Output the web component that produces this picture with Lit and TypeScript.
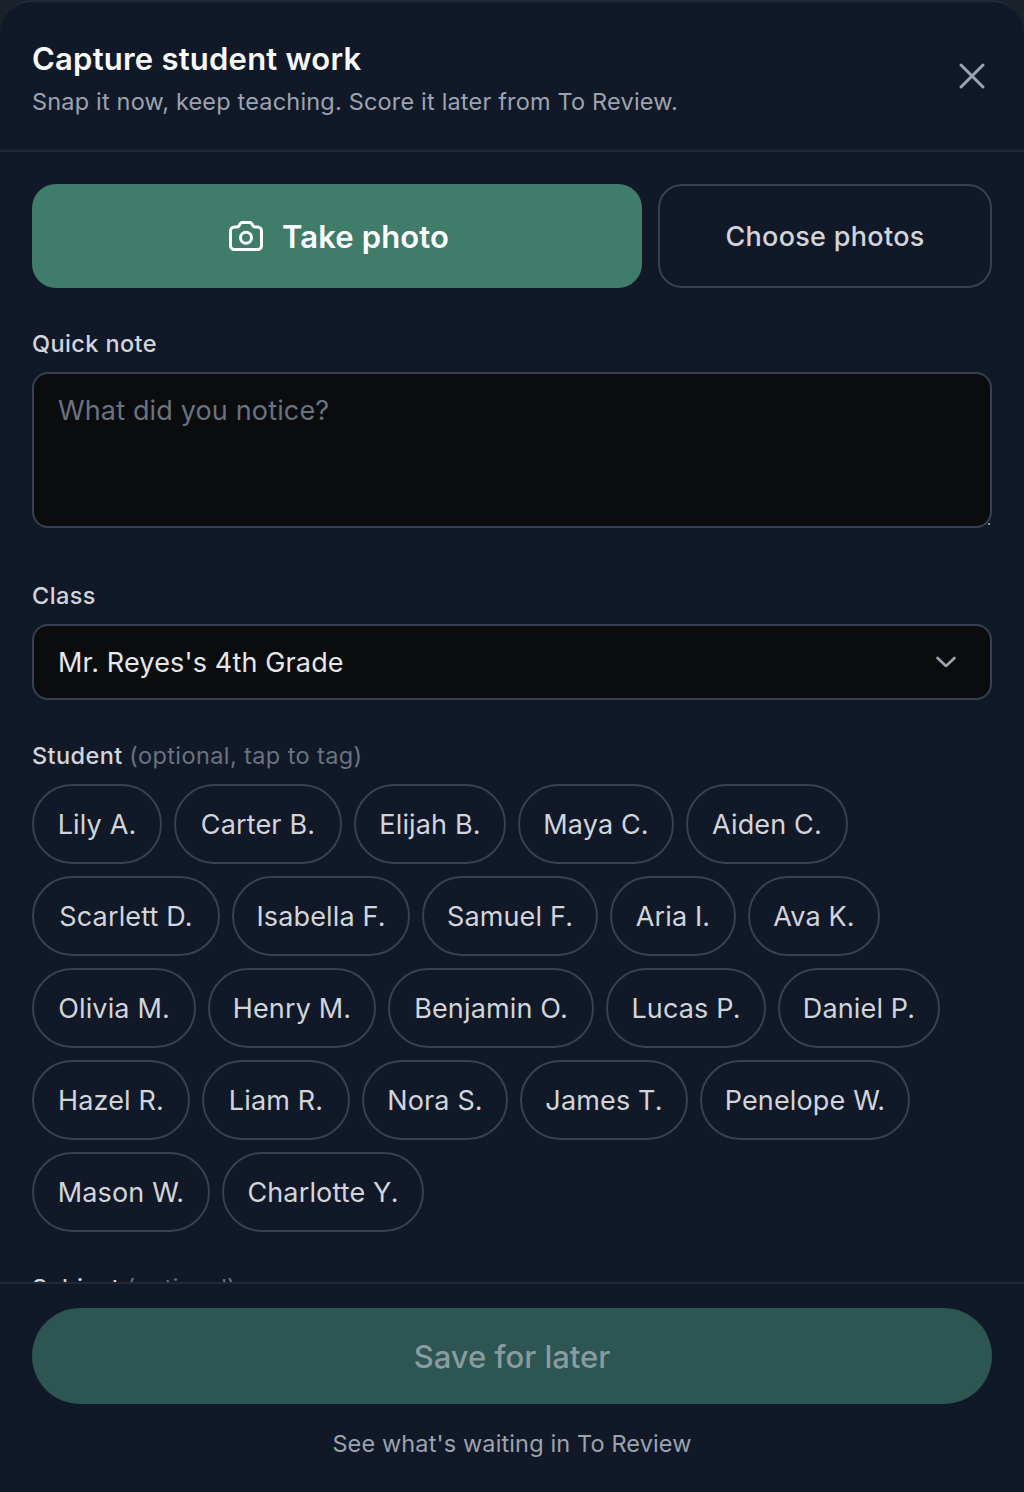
import { LitElement, html, css } from "lit";
import { customElement } from "lit/decorators.js";

const STUDENTS: [string, number][] = [["Lily A.",130],["Carter B.",168],["Elijah B.",152],["Maya C.",156],["Aiden C.",162],["Scarlett D.",188],["Isabella F.",178],["Samuel F.",176],["Aria I.",126],["Ava K.",132],["Olivia M.",164],["Henry M.",168],["Benjamin O.",206],["Lucas P.",160],["Daniel P.",162],["Hazel R.",158],["Liam R.",148],["Nora S.",146],["James T.",168],["Penelope W.",210],["Mason W.",178],["Charlotte Y.",202]];

@customElement("app-root")
export class AppRoot extends LitElement {
  static styles = css`
    :host { display: block; width: 1024px; height: 1492px; background: #1b2128; font-family: Inter, "Noto Sans", sans-serif; overflow: hidden; }
    * { box-sizing: border-box; }
    .sheet { height: 1492px; background: #111928; border-top: 2px solid #1f2937; border-radius: 32px 32px 0 0; display: flex; flex-direction: column; overflow: hidden; }
    .head { height: 150px; flex: none; border-bottom: 2px solid #1f2937; padding: 37px 32px 0 32px; display: flex; justify-content: space-between; align-items: flex-start; }
    h1 { margin: 0; font-size: 31px; line-height: 40px; font-weight: 600; color: #f9fafb; letter-spacing: 0.22px; }
    .sub { margin: 5px 0 0; font-size: 23.5px; line-height: 36px; color: #9ca3af; letter-spacing: 0.18px; }
    .close { margin: 23px 6px 0 0; width: 28px; height: 28px; color: #9ca3af; }
    .close svg { display: block; }
    .body { flex: 1; min-height: 0; overflow: hidden; padding: 32px 32px 0; }
    .actions { display: flex; gap: 16px; height: 104px; }
    .btn { display: flex; align-items: center; justify-content: center; border-radius: 24px; }
    .take { flex: 1; background: #3f7d6a; color: #fff; font-size: 31px; font-weight: 600; gap: 17px; letter-spacing: 0.13px; }
    .take svg { display: block; }
    .choose { width: 334px; flex: none; border: 2px solid #374151; color: #d1d5db; font-size: 27px; font-weight: 500; letter-spacing: 0.3px; }
    .label { font-size: 23.5px; line-height: 32px; font-weight: 500; color: #d1d5db; letter-spacing: 0.4px; }
    .label span { font-weight: 400; color: #6b7280; }
    .note-label { margin-top: 40px; }
    .note { margin-top: 12px; height: 156px; border: 2px solid #374151; border-radius: 16px; background: #0a0c0e; padding: 19px 24px; font-size: 27px; line-height: 36px; color: #6b7280; letter-spacing: 0.15px; position: relative; }
    .grip { position: absolute; right: 0; bottom: 1px; width: 2px; height: 2px; background: #8b93a0; }
    .class-label { margin-top: 52px; }
    .select { margin-top: 12px; height: 76px; border: 2px solid #374151; border-radius: 16px; background: #0a0c0e; padding: 0 32px 0 24px; display: flex; align-items: center; justify-content: space-between; font-size: 27px; color: #e5e7eb; letter-spacing: 0.15px; }
    .select svg { color: #9ca3af; display: block; }
    .student-label { margin-top: 40px; }
    .chips { margin-top: 12px; display: flex; flex-wrap: wrap; gap: 12px; }
    .chip { height: 80px; border: 2px solid #374151; border-radius: 40px; display: flex; align-items: center; justify-content: center; font-size: 27px; color: #d1d5db; letter-spacing: 0.15px; white-space: nowrap; }
    .subject-label { margin-top: 40px; }
    .foot { flex: none; height: 210px; border-top: 2px solid #1f2937; padding: 24px 32px 0; }
    .save { height: 96px; border-radius: 48px; background: #2d5552; color: #8a9ba0; font-size: 31px; font-weight: 500; display: flex; align-items: center; justify-content: center; }
    .link { margin-top: 24px; text-align: center; font-size: 23.5px; line-height: 32px; color: #9ca3af; letter-spacing: 0.13px; }
  `;

  render() {
    return html`<div class="sheet">
      <div class="head">
        <div>
          <h1>Capture student work</h1>
          <p class="sub">Snap it now, keep teaching. Score it later from To Review.</p>
        </div>
        <div class="close"><svg width="28" height="28" viewBox="0 0 28 28" fill="none" stroke="currentColor" stroke-width="3" stroke-linecap="round"><path d="M3 3l22 22M25 3L3 25"/></svg></div>
      </div>
      <div class="body">
        <div class="actions">
          <div class="btn take">
            <svg width="40" height="40" viewBox="-1 -2 40 40" fill="none" stroke="currentColor" stroke-width="3" stroke-linecap="round" stroke-linejoin="round"><path d="M8.5 9H11Q12.5 9 13.2 7.5L14 6Q14.8 4.5 16.5 4.5H23.5Q25.2 4.5 26 6L26.8 7.5Q27.5 9 29 9H31.5A4 4 0 0 1 35.5 13V27.5A4 4 0 0 1 31.5 31.5H8.5A4 4 0 0 1 4.5 27.5V13A4 4 0 0 1 8.5 9Z"/><circle cx="20" cy="19.7" r="5.5"/></svg>
            <span>Take photo</span>
          </div>
          <div class="btn choose">Choose photos</div>
        </div>
        <div class="label note-label">Quick note</div>
        <div class="note">What did you notice?<i class="grip"></i></div>
        <div class="label class-label">Class</div>
        <div class="select"><span>Mr. Reyes's 4th Grade</span>
          <svg width="24" height="24" viewBox="0 0 24 24" fill="none" stroke="currentColor" stroke-width="2.6" stroke-linecap="round" stroke-linejoin="round"><path d="M3.5 8L12 16l8.5-8"/></svg>
        </div>
        <div class="label student-label">Student <span>(optional, tap to tag)</span></div>
        <div class="chips">${STUDENTS.map(([s, w]) => html`<div class="chip" style="width:${w}px">${s}</div>`)}</div>
        <div class="label subject-label">Subject <span>(optional)</span></div>
      </div>
      <div class="foot">
        <div class="save">Save for later</div>
        <div class="link">See what's waiting in To Review</div>
      </div>
    </div>`;
  }
}
